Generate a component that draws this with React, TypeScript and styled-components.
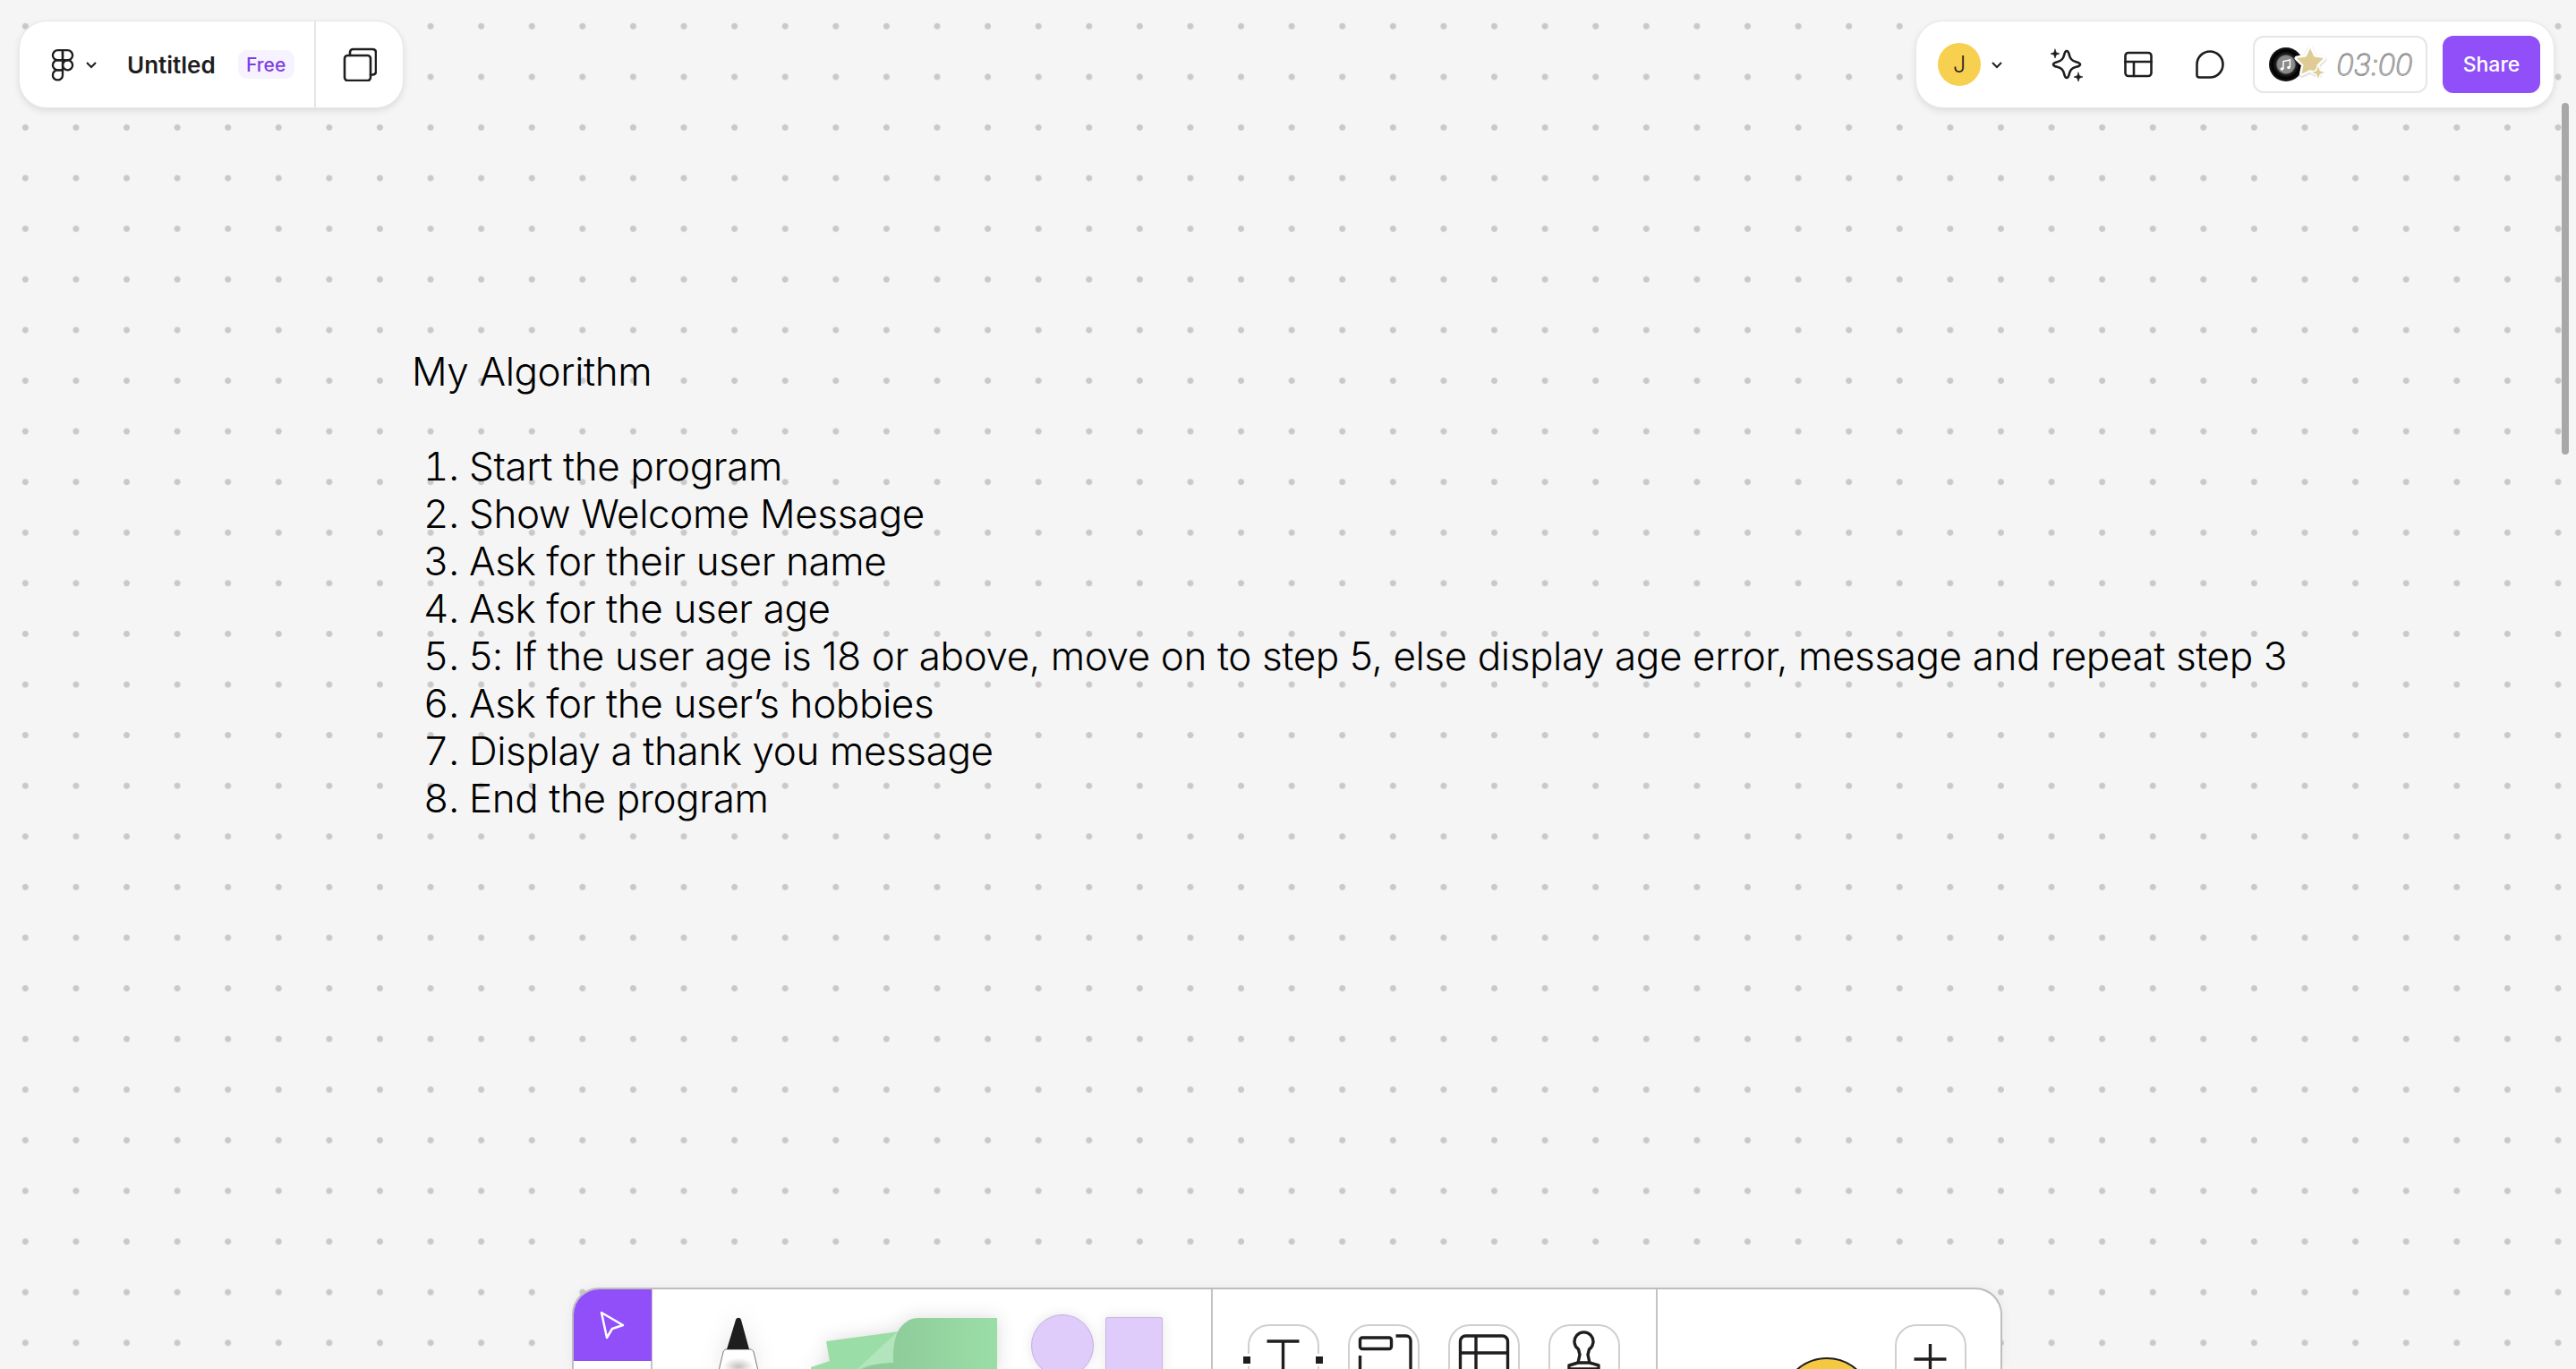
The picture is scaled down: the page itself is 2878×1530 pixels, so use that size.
import React from 'react';
import styled, { createGlobalStyle } from 'styled-components';

const GlobalStyle = createGlobalStyle`
  html, body {
    margin: 0;
    padding: 0;
    background: #f5f5f5;
  }
  body {
    font-family: Inter, "Liberation Sans", sans-serif;
    color: #1e1e1e;
  }
`;

const Page = styled.div`
  position: relative;
  display: flex;
  flex-direction: column;
  height: 100vh;
  overflow: hidden;
  background-color: #f5f5f5;
  background-image: radial-gradient(circle at center, #c9c9c9 3px, rgba(201, 201, 201, 0) 4px);
  background-size: 56.6px 56.6px;
  background-position: 0 1px;
`;

const TopBar = styled.header`
  display: flex;
  justify-content: space-between;
  padding: 24px 25px 0 22px;
`;

const Panel = styled.div`
  display: flex;
  align-items: center;
  height: 96px;
  background: #fff;
  border-radius: 30px;
  box-shadow: 0 0 0 1px #e8e8e8, 0 3px 8px rgba(0, 0, 0, 0.12);
`;

const FileSection = styled.div`
  display: flex;
  align-items: center;
  width: 331px;
  height: 100%;
  padding-left: 29px;
  box-sizing: border-box;
  border-right: 2px solid #e6e6e6;
`;

const PagesSection = styled.div`
  display: flex;
  align-items: center;
  width: 97px;
  height: 100%;
  padding-left: 30px;
  box-sizing: border-box;
`;

const Chevron = styled.svg<{ $gap: number }>`
  width: 14px;
  height: 9px;
  margin-left: ${(p) => p.$gap}px;
  flex-shrink: 0;
`;

const FileName = styled.span`
  margin-left: 33px;
  font-size: 26px;
  font-weight: 600;
`;

const PlanBadge = styled.span`
  margin-left: 25px;
  width: 63px;
  height: 32px;
  display: flex;
  align-items: center;
  justify-content: center;
  border-radius: 10px;
  background: #f6f2ff;
  color: #7c3fe4;
  font-size: 21px;
  font-weight: 500;
`;

const SessionPanel = styled(Panel)`
  width: 712px;
  padding-left: 24px;
  box-sizing: border-box;
`;

const Avatar = styled.div`
  width: 48px;
  height: 48px;
  border-radius: 50%;
  background: #f8d04f;
  display: flex;
  align-items: center;
  justify-content: center;
  font-size: 25px;
  font-weight: 300;
`;

const ToolIcon = styled.svg<{ $gap: number; $size: number }>`
  width: ${(p) => p.$size}px;
  height: ${(p) => p.$size}px;
  margin-left: ${(p) => p.$gap}px;
  flex-shrink: 0;
  fill: none;
  stroke: #1e1e1e;
  stroke-width: 2.6;
  stroke-linejoin: round;
  stroke-linecap: round;
`;

const Timer = styled.div`
  display: flex;
  align-items: center;
  width: 195px;
  height: 64px;
  margin-left: 32px;
  padding-left: 11px;
  box-sizing: border-box;
  border: 2px solid #e6e6e6;
  border-radius: 12px;
`;

const TimerArt = styled.svg`
  width: 75px;
  height: 48px;
  flex-shrink: 0;
`;

const TimerDigits = styled.span`
  margin-left: 5px;
  font-family: Inter, sans-serif;
  font-size: 33px;
  font-weight: 200;
  font-style: italic;
  letter-spacing: -0.8px;
  color: transparent;
  -webkit-text-stroke: 1px #8a8a8a;
`;

const ShareButton = styled.button`
  width: 109px;
  height: 64px;
  margin-left: 17px;
  border: 0;
  border-radius: 12px;
  background: #904ff8;
  color: #fff;
  font-family: Inter, sans-serif;
  font-size: 23px;
  font-weight: 500;
`;

const Canvas = styled.main`
  flex: 1;
  padding: 269px 0 0 460px;
  font-size: 44px;
  font-weight: 300;
  line-height: 53px;
  letter-spacing: -0.4px;
  color: #000;
`;

const Heading = styled.p`
  margin: 0 0 53px;
`;

const Steps = styled.ol`
  margin: 0;
  padding-left: 64px;
`;

const DockRow = styled.div`
  display: flex;
  justify-content: center;
  padding-right: 3px;
`;

const Dock = styled.footer`
  display: flex;
  width: 1598px;
  height: 91px;
  box-sizing: border-box;
  background: #fff;
  border: 2px solid #bdbdbd;
  border-bottom: 0;
  border-radius: 30px 30px 0 0;
  overflow: hidden;
  box-shadow: 0 0 14px rgba(0, 0, 0, 0.05);
`;

const PointerColumn = styled.div`
  width: 88px;
  flex-shrink: 0;
  box-sizing: border-box;
  border-right: 2px solid #c4c4c4;
`;

const PointerTile = styled.div`
  width: 87px;
  height: 80px;
  background: #904ff8;
  display: flex;
  align-items: center;
  justify-content: center;
`;

const MakeSection = styled.div`
  display: flex;
  width: 626px;
  flex-shrink: 0;
  align-items: flex-start;
  box-sizing: border-box;
  padding-left: 73px;
  border-right: 2px solid #c4c4c4;
`;

const Pen = styled.svg`
  width: 46px;
  height: 60px;
  margin-top: 31px;
  flex-shrink: 0;
  filter: drop-shadow(0 0 12px rgba(0, 0, 0, 0.1));
`;

const Stickies = styled.svg`
  width: 210px;
  height: 58px;
  margin: 32px 0 0 59px;
  flex-shrink: 0;
  overflow: visible;
  filter: drop-shadow(0 0 10px rgba(0, 0, 0, 0.14));
`;

const ShapeCircle = styled.div`
  width: 70px;
  height: 70px;
  margin: 28px 0 0 35px;
  flex-shrink: 0;
  box-sizing: border-box;
  border-radius: 50%;
  background: #dfccfa;
  border: 1.5px solid #c3aee0;
  box-shadow: 0 0 14px rgba(0, 0, 0, 0.1);
`;

const ShapeSquare = styled.div`
  width: 64px;
  height: 70px;
  margin: 31px 0 0 13px;
  flex-shrink: 0;
  box-sizing: border-box;
  background: #dfccfa;
  border: 1.5px solid #c8b4e4;
  border-radius: 2px;
  box-shadow: 0 0 14px rgba(0, 0, 0, 0.1);
`;

const InsertSection = styled.div`
  display: flex;
  width: 497px;
  flex-shrink: 0;
  align-items: flex-start;
  gap: 32px;
  box-sizing: border-box;
  padding: 39px 0 0 39px;
  border-right: 2px solid #c4c4c4;
`;

const Card = styled.div`
  position: relative;
  width: 80px;
  height: 90px;
  flex-shrink: 0;
  box-sizing: border-box;
  border: 2.5px solid #cfcfcf;
  border-radius: 24px 24px 0 0;
  background: #fff;
`;

const CardGlyph = styled.svg`
  display: block;
  width: 75px;
  height: 60px;
  fill: none;
  stroke: #1e1e1e;
  stroke-width: 3.4;
  stroke-linejoin: round;
`;

const Handle = styled.span<{ $side: 'left' | 'right' }>`
  position: absolute;
  top: 34px;
  ${(p) => p.$side}: -6.5px;
  width: 8px;
  height: 8px;
  background: #1e1e1e;
  box-shadow: 0 0 0 3px #fff;
`;

const ExtrasSection = styled.div`
  display: flex;
  flex: 1;
  align-items: flex-start;
  box-sizing: border-box;
  padding-left: 138px;
`;

const Sticker = styled.div`
  width: 102px;
  height: 102px;
  margin-top: 76px;
  flex-shrink: 0;
  box-sizing: border-box;
  border-radius: 50%;
  background: #f5c842;
  border: 2px solid #1e1e1e;
`;

const AddCard = styled(Card)`
  margin: 39px 0 0 25px;
`;

const ScrollThumb = styled.div`
  position: absolute;
  top: 115px;
  right: 8px;
  width: 8px;
  height: 393px;
  border-radius: 4px;
  background: #a8a8a8;
`;

const steps = [
  'Start the program',
  'Show Welcome Message',
  'Ask for their user name',
  'Ask for the user age',
  '5: If the user age is 18 or above, move on to step 5, else display age error, message and repeat step 3',
  'Ask for the user’s hobbies',
  'Display a thank you message',
  'End the program',
];

function ChevronDown({ gap }: { gap: number }) {
  return (
    <Chevron $gap={gap} viewBox="0 0 14 9">
      <path d="M2 2l5 5 5-5" fill="none" stroke="#1e1e1e" strokeWidth="2" />
    </Chevron>
  );
}

export default function App() {
  return (
    <Page>
      <GlobalStyle />
      <TopBar>
        <Panel>
          <FileSection>
            <ToolIcon $gap={0} $size={38} viewBox="0 0 24 24" style={{ strokeWidth: 1.5 }}>
              <path d="M5 5.5A3.5 3.5 0 0 1 8.5 2H12v7H8.5A3.5 3.5 0 0 1 5 5.5z" />
              <path d="M12 2h3.5a3.5 3.5 0 1 1 0 7H12V2z" />
              <path d="M12 12.5a3.5 3.5 0 1 1 7 0 3.5 3.5 0 1 1-7 0z" />
              <path d="M5 19.5A3.5 3.5 0 0 1 8.5 16H12v3.5a3.5 3.5 0 1 1-7 0z" />
              <path d="M5 12.5A3.5 3.5 0 0 1 8.5 9H12v7H8.5A3.5 3.5 0 0 1 5 12.5z" />
            </ToolIcon>
            <ChevronDown gap={6} />
            <FileName>Untitled</FileName>
            <PlanBadge>Free</PlanBadge>
          </FileSection>
          <PagesSection>
            <ToolIcon $gap={0} $size={38} viewBox="0 0 38 38">
              <rect x="2" y="9" width="29" height="28" rx="3.5" />
              <path d="M8 9V5.5A3.5 3.5 0 0 1 11.5 2H33.5A3.5 3.5 0 0 1 37 5.5V27A3.5 3.5 0 0 1 33.5 30.5H31" />
            </ToolIcon>
          </PagesSection>
        </Panel>
        <SessionPanel>
          <Avatar>J</Avatar>
          <ChevronDown gap={11} />
          <ToolIcon $gap={51} $size={40} viewBox="0 0 40 40">
            <path d="M20 5C22 5 22.500 8 23 10C24 14 26 16 30 17C32 17.500 35 18 35 20C35 22 32 22.500 30 23C26 24 24 26 23 30C22.500 32 22 35 20 35C18 35 17.500 32 17 30C16 26 14 24 10 23C8 22.500 5 22 5 20C5 18 8 17.500 10 17C14 16 16 14 17 10C17.500 8 18 5 20 5Z" />
            <path d="M7 3l1.300 3.700L12 8l-3.700 1.300L7 13l-1.300-3.700L2 8l3.700-1.300z" fill="#1e1e1e" strokeWidth="0.6" />
            <path d="M33 29l1.300 3.700L38 34l-3.700 1.300L33 39l-1.300-3.700L28 34l3.700-1.300z" fill="#1e1e1e" strokeWidth="0.6" />
          </ToolIcon>
          <ToolIcon $gap={44} $size={32} viewBox="0 0 32 32">
            <rect x="1.500" y="3" width="29" height="26" rx="3.500" />
            <path d="M1.500 13H30.500M11 13V29" />
          </ToolIcon>
          <ToolIcon $gap={48} $size={32} viewBox="0 0 32 32">
            <path d="M1.500 16A14.500 14.500 0 1 1 16 30.500H4A2.500 2.500 0 0 1 1.500 28Z" />
          </ToolIcon>
          <Timer>
            <TimerArt viewBox="0 0 75 48">
              <defs>
                <radialGradient id="vinyl" cx="0.5" cy="0.5" r="0.5">
                  <stop offset="0.55" stopColor="#2a2a2a" />
                  <stop offset="0.8" stopColor="#000" />
                  <stop offset="1" stopColor="#1a1a1a" />
                </radialGradient>
              </defs>
              <circle cx="24" cy="24" r="19" fill="url(#vinyl)" />
              <circle cx="24" cy="24" r="10.500" fill="#8a8a8a" stroke="#555" strokeWidth="0.6" />
              <path d="M21 29V20.500L28.500 19V27.500" fill="none" stroke="#fff" strokeWidth="1.500" />
              <circle cx="19.500" cy="29" r="1.800" fill="#fff" />
              <circle cx="27" cy="27.500" r="1.800" fill="#fff" />
              <path
                d="M51 6L55.500 15.500L66 17L58.500 24.500L60.500 35L51 30L41.500 34.500L43.500 24.500L36 17L46.500 15.500Z"
                fill="#dfcb94"
                stroke="#fff"
                strokeWidth="5"
                strokeLinejoin="round"
                paintOrder="stroke"
                style={{ filter: 'drop-shadow(0 1px 1px rgba(0,0,0,.25))' }}
              />
              <path
                d="M60 26L61.800 31.200L67 33L61.800 34.800L60 40L58.200 34.800L53 33L58.200 31.200Z"
                fill="#dfcb94"
                stroke="#fff"
                strokeWidth="3"
                strokeLinejoin="round"
                paintOrder="stroke"
              />
            </TimerArt>
            <TimerDigits>03:00</TimerDigits>
          </Timer>
          <ShareButton>Share</ShareButton>
        </SessionPanel>
      </TopBar>

      <Canvas>
        <Heading>My Algorithm</Heading>
        <Steps>
          {steps.map((step) => (
            <li key={step}>{step}</li>
          ))}
        </Steps>
      </Canvas>

      <DockRow>
        <Dock>
          <PointerColumn>
            <PointerTile>
              <svg width="30" height="32" viewBox="0 0 30 32">
                <path
                  d="M3 2L27 16L15 20L9 30Z"
                  fill="none"
                  stroke="#fff"
                  strokeWidth="2.500"
                  strokeLinejoin="round"
                />
              </svg>
            </PointerTile>
          </PointerColumn>
          <MakeSection>
            <Pen viewBox="0 0 46 60">
              <defs>
                <radialGradient id="penBody" cx="0.5" cy="0.8" r="0.4">
                  <stop offset="0" stopColor="#c2c2c2" />
                  <stop offset="1" stopColor="#fff" />
                </radialGradient>
              </defs>
              <path
                d="M9 36H36C38 36 39 37 40 39L45 60H1L6 39C7 37 7.500 36 9 36Z"
                fill="url(#penBody)"
                stroke="#777"
                strokeWidth="1"
              />
              <path d="M10 36L20 3C21 0 25 0 26 3L35 36Z" fill="#1e1e1e" />
            </Pen>
            <Stickies viewBox="0 0 210 58">
              <defs>
                <linearGradient id="sheet" x1="0" y1="0" x2="1" y2="0">
                  <stop offset="0" stopColor="#8ac796" />
                  <stop offset="1" stopColor="#9bdda7" />
                </linearGradient>
              </defs>
              <path d="M-1 55L20 48L24 60H-1Z" fill="#9bdda7" />
              <path d="M16 26L98 15L100 60H22Z" fill="#9bdda7" />
              <path d="M96 15C102 6 108 0 120 0H207V60H50C65 52 80 50 91 50C90 38 92 24 96 15Z" fill="url(#sheet)" />
              <path d="M96 15C92 24 90 38 91 50C78 50 62 52 50 58Z" fill="#b3e5bd" />
            </Stickies>
            <ShapeCircle />
            <ShapeSquare />
          </MakeSection>
          <InsertSection>
            <Card>
              <Handle $side="left" />
              <Handle $side="right" />
              <CardGlyph viewBox="0 0 75 60">
                <path d="M19.500 17H55.500M37.500 17V60" />
              </CardGlyph>
            </Card>
            <Card>
              <CardGlyph viewBox="0 0 75 60">
                <path d="M14 13H44A2.500 2.500 0 0 1 46.500 15.500V23A2.500 2.500 0 0 1 44 25.500H14A2.500 2.500 0 0 1 11.500 23V15.500A2.500 2.500 0 0 1 14 13Z" />
                <path d="M51.500 11H63A5 5 0 0 1 68 16V60M11.500 33V60" />
              </CardGlyph>
            </Card>
            <Card>
              <CardGlyph viewBox="0 0 75 60">
                <rect x="11.500" y="11" width="53" height="60" rx="6" />
                <path d="M11.500 30H64.500M29 11V60" />
              </CardGlyph>
            </Card>
            <Card>
              <CardGlyph viewBox="0 0 75 60">
                <path d="M33 32L31.500 26A10.500 10.500 0 1 1 43.500 26L42 32L44 41H31Z" />
                <path d="M31 41L21 44V60M44 41L54 44V60M21 48H54" />
              </CardGlyph>
            </Card>
          </InsertSection>
          <ExtrasSection>
            <Sticker />
            <AddCard>
              <CardGlyph viewBox="0 0 75 60">
                <path d="M19.500 37H55.500M37.500 20V60" />
              </CardGlyph>
            </AddCard>
          </ExtrasSection>
        </Dock>
      </DockRow>
      <ScrollThumb />
    </Page>
  );
}
